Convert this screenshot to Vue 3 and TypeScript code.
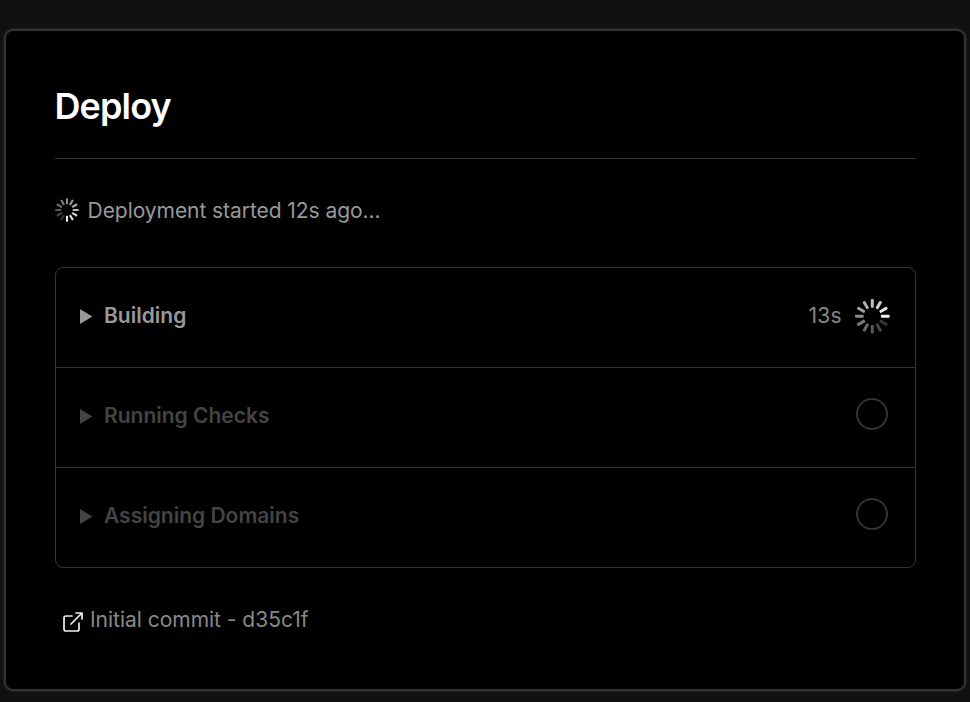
<script setup lang="ts">
interface Step {
  label: string
  active: boolean
  time?: string
}

const steps: Step[] = [
  { label: 'Building', active: true, time: '13s' },
  { label: 'Running Checks', active: false },
  { label: 'Assigning Domains', active: false },
]

// Spokes go counterclockwise from the brightest one.
const spokes = Array.from({ length: 12 }, (_, i) => ({
  angle: -30 * i,
  opacity: 0.95 - i * 0.067,
}))
</script>

<template>
  <main class="page">
    <section class="card">
      <h1 class="title">Deploy</h1>
      <div class="status">
        <svg class="spinner-small" viewBox="0 0 36 36">
          <g transform="translate(18 18) rotate(90)">
            <rect v-for="s in spokes" :key="s.angle" x="8.6" y="-1.6" width="9" height="3.2" rx="1"
              fill="#fff" :fill-opacity="s.opacity" :transform="`rotate(${s.angle})`" />
          </g>
        </svg>
        <span class="status-text">Deployment started 12s ago...</span>
      </div>
      <ul class="steps">
        <li v-for="step in steps" :key="step.label" class="step" :class="{ active: step.active }">
          <svg class="arrow" viewBox="0 0 13 16"><path d="M0 1 12.4 8.5 0 16z" fill="currentColor" /></svg>
          <span class="label">{{ step.label }}</span>
          <span v-if="step.time" class="time">{{ step.time }}</span>
          <svg v-if="step.active" class="spinner" viewBox="0 0 36 36">
            <g transform="translate(18.3 18.3)">
              <rect v-for="s in spokes" :key="s.angle" x="8.6" y="-1.5" width="8.7" height="3" rx="1"
                fill="#fff" :fill-opacity="s.opacity" :transform="`rotate(${s.angle})`" />
            </g>
          </svg>
          <span v-else class="circle"></span>
        </li>
      </ul>
      <div class="commit">
        <svg class="external" viewBox="0 0 24 24" fill="none" stroke="#eee" stroke-width="1.7" stroke-linecap="round" stroke-linejoin="round">
          <path d="M18 13v6a2 2 0 0 1-2 2H5a2 2 0 0 1-2-2V8a2 2 0 0 1 2-2h6M15 3h6v6M10 14 21 3" />
        </svg>
        <span class="commit-text">Initial commit - d35c1f</span>
      </div>
    </section>
  </main>
</template>

<style>
body {
  background: #111;
}
</style>

<style scoped>
.page {
  box-sizing: border-box;
  height: 702px;
  padding: 29px 4px 11px;
  background: #111;
  font-family: Inter, "Liberation Sans", sans-serif;
  color: #999;
  font-size: 21px;
}
.card {
  box-sizing: border-box;
  height: 662px;
  width: 962px;
  padding: 0 48px 0 49px;
  border: 2px solid #333;
  border-radius: 9px;
  background: #000;
  box-shadow: 0 0 0 1px #1e1e1e;
}
.title {
  box-sizing: border-box;
  height: 128px;
  margin: 0 0 0 -0.6px;
  padding-top: 53px;
  color: #fff;
  font-size: 36px;
  line-height: 44px;
  font-weight: 620;
  letter-spacing: -0.85px;
}
.status {
  display: flex;
  align-items: center;
  height: 67px;
  margin-top: -1px;
  padding-top: 36px;
  box-sizing: border-box;
  border-top: 1px solid #333;
}
.status-text {
  letter-spacing: -0.06px;
}
.spinner-small {
  width: 24px;
  height: 24px;
  margin-right: 8.6px;
}
.steps {
  list-style: none;
  margin: 42px 0 0;
  padding: 0;
  border: 1px solid #333;
  border-radius: 8px;
}
.step {
  box-sizing: border-box;
  display: flex;
  align-items: center;
  height: 100px;
  padding: 0 27px 3px 24px;
  color: #444;
}
.step + .step {
  border-top: 1px solid #333;
}
.step:first-child {
  height: 99px;
}
.step.active {
  padding: 0 25px 3px 24px;
  color: #999;
}
.arrow {
  width: 13px;
  height: 16px;
  margin-right: 11px;
}
.label {
  flex: 1;
  font-weight: 600;
  line-height: 26px;
  padding-bottom: 1px;
}
.time {
  margin-right: 12px;
  padding-bottom: 1px;
  line-height: 26px;
  color: #888;
  letter-spacing: 0.3px;
}
.spinner {
  width: 36px;
  height: 36px;
}
.circle {
  box-sizing: border-box;
  width: 32px;
  height: 32px;
  margin-bottom: 4px;
  border: 2px solid #333;
  border-radius: 50%;
}
.commit {
  display: flex;
  align-items: center;
  height: 30px;
  margin: 37px 0 0 6px;
  color: #888;
}
.commit-text {
  padding-bottom: 1px;
  letter-spacing: -0.02px;
}
.external {
  width: 24px;
  height: 24px;
  margin: 3px 5px 0 0;
}
</style>
